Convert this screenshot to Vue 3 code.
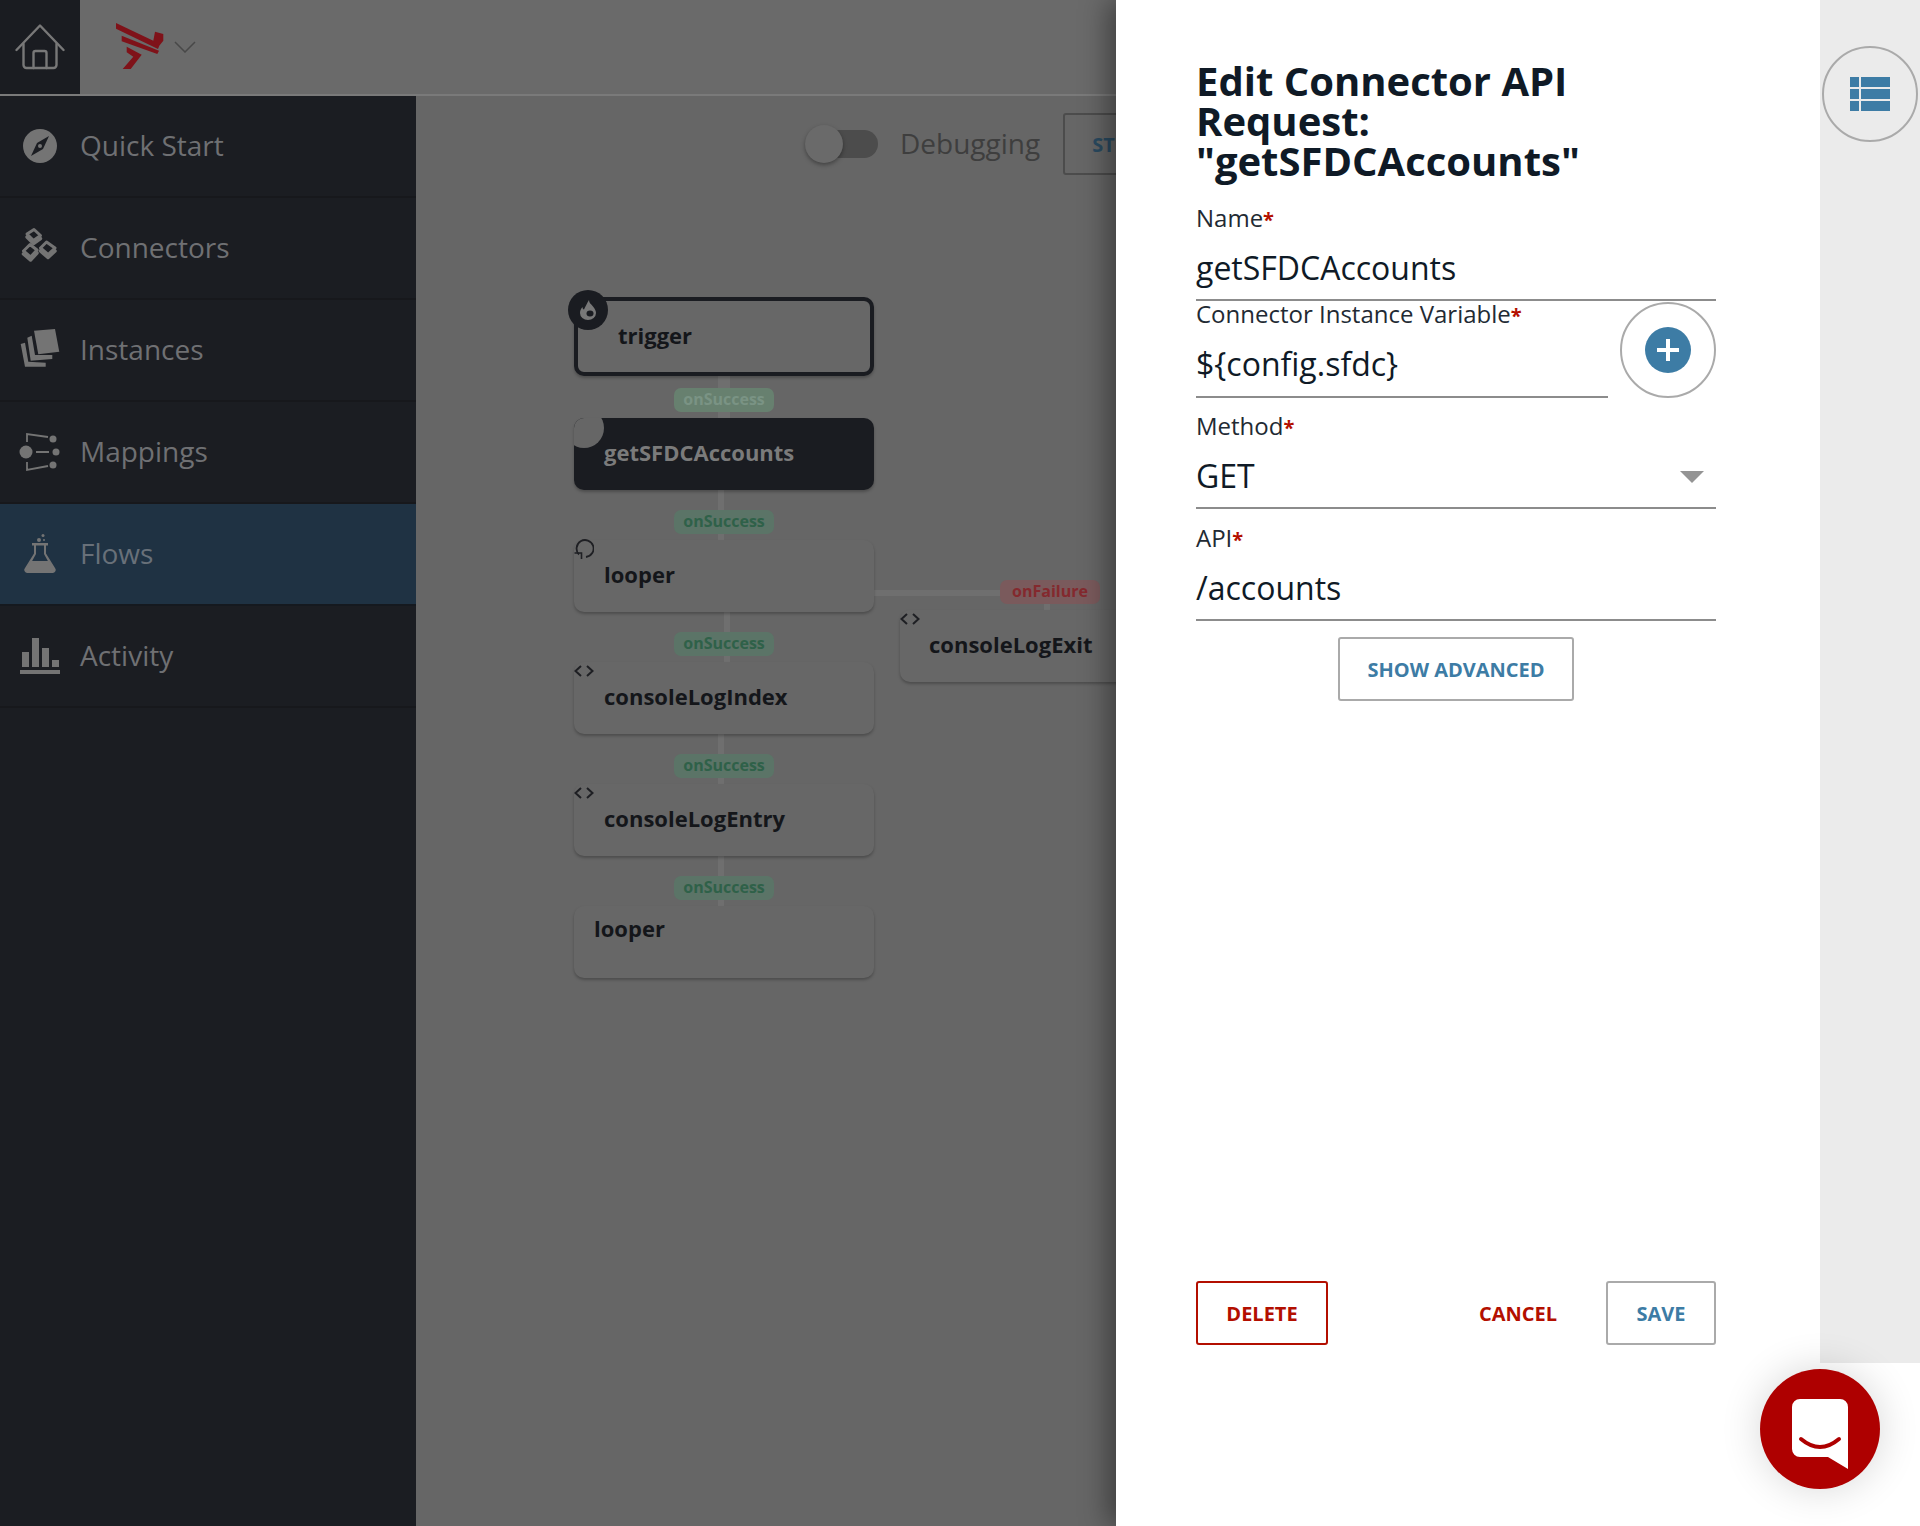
<script setup>
const navItems = [
  { label: 'Quick Start', icon: 'compass' },
  { label: 'Connectors', icon: 'cubes' },
  { label: 'Instances', icon: 'stack' },
  { label: 'Mappings', icon: 'map' },
  { label: 'Flows', icon: 'flask', active: true },
  { label: 'Activity', icon: 'bars' },
]
const nodes = [
  { label: 'trigger', x: 158, y: 201, h: 79, cls: 'selected', tx: 40, ty: 0 },
  { label: 'getSFDCAccounts', x: 158, y: 322, h: 72, cls: 'dark', tx: 30, ty: 0 },
  { label: 'looper', x: 158, y: 444, h: 72, icon: 'loop', tx: 30, ty: 0 },
  { label: 'consoleLogIndex', x: 158, y: 566, h: 72, icon: 'code', tx: 30, ty: 0 },
  { label: 'consoleLogEntry', x: 158, y: 688, h: 72, icon: 'code', tx: 30, ty: 0 },
  { label: 'looper', x: 158, y: 810, h: 72, tx: 20, ty: -12 },
  { label: 'consoleLogExit', x: 484, y: 514, h: 72, icon: 'code', tx: 29, ty: 0 },
]
const wires = [
  { x: 302, y: 279, w: 12, h: 44 },
  { x: 302, y: 394, w: 6, h: 50 },
  { x: 308, y: 516, w: 6, h: 50 },
  { x: 302, y: 638, w: 6, h: 50 },
  { x: 302, y: 760, w: 6, h: 50 },
  { x: 458, y: 494, w: 130, h: 6 },
  { x: 628, y: 505, w: 6, h: 10 },
]
const pills = [
  { label: 'onSuccess', x: 258, y: 292, cls: 'faint' },
  { label: 'onSuccess', x: 258, y: 414, cls: 'ok' },
  { label: 'onSuccess', x: 258, y: 536, cls: 'ok' },
  { label: 'onSuccess', x: 258, y: 658, cls: 'ok' },
  { label: 'onSuccess', x: 258, y: 780, cls: 'ok' },
  { label: 'onFailure', x: 584, y: 484, cls: 'bad' },
]
const place = (o) => ({ left: o.x + 'px', top: o.y + 'px' })
</script>

<template>
  <div class="page">
    <div class="main">
      <header class="topbar">
        <div class="home">
          <svg width="50" height="46" viewBox="0 0 50 46" fill="none" stroke="#787878" stroke-width="2.4" stroke-linecap="round" stroke-linejoin="round">
            <path d="M1.500 26 25 1.500 48.500 26" />
            <path d="M8.500 20v21a3 3 0 0 0 3 3h27a3 3 0 0 0 3-3V20" />
            <path d="M18.500 44V29a2 2 0 0 1 2-2h9a2 2 0 0 1 2 2v15" />
          </svg>
        </div>
        <svg class="logo" width="50" height="48" viewBox="0 0 50 48" fill="#7f1219">
          <path d="M0 0 37.300 17.700 39 8.700 47.300 11V17.700L43.300 22.700 42 26 0 5.700z" />
          <path d="M5.700 12.700 43 27.700 41.300 31 5.700 18.300z" />
          <path d="M10.700 23.700 25.700 31.700 14.700 46H6.700L17.300 33.700 10.700 29.300z" />
        </svg>
        <svg class="chev" width="22" height="12" viewBox="0 0 22 12" fill="none" stroke="#484848" stroke-width="1.500"><path d="M1 1l10 10L21 1" /></svg>
      </header>
      <div class="body">
        <nav class="sidebar">
          <a v-for="item in navItems" :key="item.label" class="nav-item" :class="{ active: item.active }">
            <span class="nav-icon">
              <svg width="40" height="40" viewBox="0 0 40 40" fill="#747474">
                <template v-if="item.icon === 'compass'">
                  <circle cx="20" cy="20" r="17" />
                  <path d="M29 10 17 17 11 30 23 23z" fill="#1b1d22" />
                  <circle cx="20" cy="20" r="2" fill="#747474" />
                </template>
                <template v-else-if="item.icon === 'cubes'">
                  <g fill="#747474" stroke="#747474" stroke-width="3.500" stroke-linejoin="round">
                    <path d="M14 4.500 20.500 10.500 13.500 15.500 7 9z" />
                    <path d="M10 19.500 17 25 10.500 32 3.500 26z" />
                    <path d="M26.500 17 35 23 28 29.500 20.500 23z" />
                  </g>
                  <g fill="#1b1d22" stroke="#747474" stroke-width="3" stroke-linejoin="round">
                    <path d="M14 1.500 20.500 7.500 13.500 12.500 7 6z" />
                    <path d="M10 16.500 17 22 10.500 29 3.500 23z" />
                    <path d="M26.500 14 35 20 28 26.500 20.500 20z" />
                  </g>
                </template>
                <template v-else-if="item.icon === 'stack'">
                  <path d="M14 .7 35-1 39.300 21.700 18.300 24.300z" />
                  <path d="M7.300 7.700 11.700 5.700 15 25H32.300V29L10.700 30.700z" />
                  <path d="M.7 14 5 12.700 8.300 31.700 25.700 32.700V36.700H5z" />
                </template>
                <template v-else-if="item.icon === 'map'">
                  <circle cx="6" cy="20" r="6.500" />
                  <circle cx="33" cy="7" r="3.500" />
                  <circle cx="36" cy="20" r="3.500" />
                  <circle cx="33" cy="33" r="3.500" />
                  <path d="M7 10V2l21 3M16 20h13M7 30v8l21-4" fill="none" stroke="#747474" stroke-width="1.800" />
                </template>
                <template v-else-if="item.icon === 'flask'">
                  <circle cx="23" cy="1.500" r="1.500" />
                  <circle cx="19" cy="6" r="2" />
                  <circle cx="24" cy="6" r="1" />
                  <rect x="12" y="9" width="16" height="2.500" />
                  <path d="M14 11h2v9L11 29h18l-5-9v-9h2v8.500l9 14.500a3 3 0 0 1-2 5H7a3 3 0 0 1-2-5l9-14.500z" />
                  <path d="M11 27h18l5 8-1 2H7l-1-2z" />
                </template>
                <template v-else>
                  <rect x="2" y="16" width="7" height="15" />
                  <rect x="12" y="2" width="7" height="29" />
                  <rect x="22" y="12" width="7" height="19" />
                  <rect x="32" y="24" width="7" height="7" />
                  <rect x="0" y="34" width="40" height="4" />
                </template>
              </svg>
            </span>
            <span class="nav-label">{{ item.label }}</span>
          </a>
        </nav>
        <section class="canvas">
          <div class="toolbar">
            <span class="switch"><span class="knob"></span></span>
            <span class="debug">Debugging</span>
            <button class="step">STEP</button>
          </div>
          <div v-for="(w, i) in wires" :key="'w' + i" class="wire" :style="{ ...place(w), width: w.w + 'px', height: w.h + 'px' }"></div>
          <div v-for="(n, i) in nodes" :key="'n' + i" class="node" :class="n.cls" :style="{ ...place(n), height: n.h + 'px', paddingLeft: n.tx + 'px' }">
            <span class="node-text" :style="{ marginTop: n.ty * 2 + 'px' }">{{ n.label }}</span>
            <span v-if="n.cls === 'selected'" class="badge fire">
              <svg width="16" height="20" viewBox="0 0 16 20" fill="#787878"><path d="M9 0c0 3 2 4 4 6.500 2 2.500 3 4.500 3 6.500a8 7 0 0 1-16 0c0-2.500 1-4.500 2.500-6 0 1.500.7 2.500 1.500 2.500C5 7 7 3.500 9 0z" /><ellipse cx="10" cy="13.500" rx="3.500" ry="3" fill="#1a1c21" /></svg>
            </span>
            <span v-if="n.cls === 'dark'" class="badge blank"></span>
            <svg v-if="n.icon === 'loop'" class="node-icon" width="20" height="20" viewBox="0 0 20 20" fill="none" stroke="#1e1f23" stroke-width="1.800"><path d="M5 15.500A8.500 8.500 0 1 1 12 18" /><path d="M0.500 14h7v6" stroke-width="1.600" /></svg>
            <svg v-if="n.icon === 'code'" class="node-icon" width="20" height="20" viewBox="0 0 20 20" fill="none" stroke="#1e1f23" stroke-width="2"><path d="M7 5 1.500 10 7 15M13 5l5.500 5L13 15" /></svg>
          </div>
          <span v-for="(p, i) in pills" :key="'p' + i" class="pill" :class="p.cls" :style="place(p)">{{ p.label }}</span>
        </section>
      </div>
    </div>
    <aside class="panel">
      <h1 class="title">Edit Connector API Request: "getSFDCAccounts"</h1>
      <div class="field">
        <label>Name<em>*</em></label>
        <div class="value">getSFDCAccounts</div>
      </div>
      <div class="with-action">
        <div class="field grow">
          <label>Connector Instance Variable<em>*</em></label>
          <div class="value">${config.sfdc}</div>
        </div>
        <button class="round-add">
          <svg width="46" height="46" viewBox="0 0 46 46"><circle cx="23" cy="23" r="23" fill="#3d7ca5" /><path d="M23 12v22M12 23h22" stroke="#fff" stroke-width="4" /></svg>
        </button>
      </div>
      <div class="field gap">
        <label>Method<em>*</em></label>
        <div class="value select">GET<i class="arrow"></i></div>
      </div>
      <div class="field gap api">
        <label>API<em>*</em></label>
        <div class="value">/accounts</div>
      </div>
      <button class="btn advanced">SHOW ADVANCED</button>
      <div class="actions">
        <button class="btn delete">DELETE</button>
        <button class="btn-text">CANCEL</button>
        <button class="btn save">SAVE</button>
      </div>
    </aside>
    <aside class="rail">
      <div class="rail-top">
        <button class="round-list">
          <svg width="40" height="34" viewBox="0 0 40 34" fill="#3d7ca5">
            <rect x="0" y="0" width="9" height="10" /><rect x="11" y="0" width="29" height="10" />
            <rect x="0" y="12" width="9" height="10" /><rect x="11" y="12" width="29" height="10" />
            <rect x="0" y="24" width="9" height="10" /><rect x="11" y="24" width="29" height="10" />
          </svg>
        </button>
      </div>
      <button class="chat">
        <svg width="56" height="70" viewBox="0 0 56 70">
          <path d="M8 0h40a8 8 0 0 1 8 8v62L36 58H8a8 8 0 0 1-8-8V8a8 8 0 0 1 8-8z" fill="#fff" />
          <path d="M9 40q19 16 38 0" fill="none" stroke="#ae0000" stroke-width="4" stroke-linecap="round" />
        </svg>
      </button>
    </aside>
  </div>
</template>

<style>
html, body { margin: 0; background: #fff; }
</style>

<style scoped>
* { box-sizing: border-box; }
.page {
  display: flex;
  width: 1920px;
  height: 1526px;
  overflow: hidden;
  font-family: "Open Sans", "Liberation Sans", sans-serif;
  color: #0f1a26;
}
button { font-family: inherit; background: none; padding: 0; cursor: pointer; }
.main {
  width: 1116px;
  flex: none;
  display: flex;
  flex-direction: column;
  overflow: hidden;
}
.topbar {
  height: 96px;
  flex: none;
  display: flex;
  align-items: center;
  background: #6a6a6a;
  border-bottom: 2px solid #7a7a7a;
}
.home {
  width: 80px;
  height: 94px;
  background: #1a1c21;
  display: flex;
  align-items: center;
  justify-content: center;
}
.logo { margin-left: 36px; margin-top: -1px; }
.chev { margin-left: 8px; margin-top: 0; }
.body { flex: 1; display: flex; min-height: 0; }
.sidebar {
  width: 416px;
  flex: none;
  background: #1b1d22;
}
.nav-item {
  height: 102px;
  padding-left: 20px;
  display: flex;
  align-items: center;
  gap: 20px;
  border-bottom: 2px solid #17181c;
  font-size: 28px;
  color: #6f7073;
}
.nav-item.active { background: #1f3243; color: #687079; border-bottom-color: #15191f; }
.nav-icon { width: 40px; height: 40px; display: flex; }
.nav-icon svg { overflow: visible; }
.nav-label { margin-bottom: 2px; }
.canvas { flex: 1; position: relative; background: #666; overflow: hidden; min-width: 0; }
.toolbar {
  display: flex;
  align-items: center;
  height: 62px;
  margin-top: 17px;
  padding-left: 399px;
}
.switch {
  position: relative;
  width: 63px;
  height: 28px;
  flex: none;
  border-radius: 14px;
  background: #4c4c4c;
}
.knob {
  position: absolute;
  left: -10px;
  top: -5px;
  width: 38px;
  height: 38px;
  border-radius: 50%;
  background: #6a6a6a;
  box-shadow: 0 2px 4px rgba(0, 0, 0, .35);
}
.debug { margin-left: 22px; margin-bottom: 2px; flex: none; font-size: 28px; color: #3e3e3e; }
.step {
  margin-left: 23px;
  height: 62px;
  width: 160px;
  flex: none;
  text-align: left;
  padding-left: 27px;
  border: 2px solid #4c4c4c;
  border-radius: 3px;
  font-size: 20px;
  font-weight: 700;
  color: #2a4a60;
}
.wire { position: absolute; background: #6f6f6f; }
.node {
  position: absolute;
  width: 300px;
  display: flex;
  align-items: center;
  background: #676767;
  border-radius: 10px;
  box-shadow: 0 2px 3px rgba(0, 0, 0, .25);
  font-size: 22px;
  font-weight: 700;
  color: #14161a;
}
.node.selected { border: 4px solid #1a1c21; }
.node.dark { background: #1a1c21; color: #7b7b7b; overflow: hidden; }
.node-text { position: relative; top: -2px; }
.badge { position: absolute; border-radius: 50%; display: flex; align-items: center; justify-content: center; }
.fire { left: -10px; top: -11px; width: 40px; height: 40px; background: #1a1c21; }
.blank { left: -10px; top: -10px; width: 40px; height: 40px; background: #666; }
.node-icon { position: absolute; left: 0; top: -1px; }
.pill {
  position: absolute;
  width: 100px;
  height: 24px;
  line-height: 23px;
  border-radius: 7px;
  text-align: center;
  font-size: 16px;
  font-weight: 700;
}
.pill.ok { background: #5b7467; color: #2f6149; }
.pill.faint { background: #67806f; color: #7a9384; }
.pill.bad { background: #7a5a5c; color: #84292e; }
.panel {
  width: 704px;
  flex: none;
  position: relative;
  z-index: 2;
  display: flex;
  flex-direction: column;
  padding: 60.500px 104px 181px 80px;
  background: #fff;
  box-shadow: -8px 0 26px rgba(0, 0, 0, .4);
}
.title {
  margin: 0 0 22.500px;
  font-size: 40px;
  line-height: 40px;
  font-weight: 700;
  color: #0f1a26;
  width: 440px;
}
.field { height: 98px; display: flex; flex-direction: column; border-bottom: 2px solid #8c8c8c; }
.field.gap { margin-top: 13px; }
.field.api { margin-top: 14px; }
.field.grow { flex: 1; height: 99px; }
label {
  height: 30px;
  font-size: 24px;
  line-height: 30px;
  color: #222a33;
}
label em { color: #b30f00; font-style: normal; font-weight: 700; font-size: 20px; }
.value {
  font-size: 32px;
  line-height: 44px;
  margin-top: 12.500px;
  color: #0f1a26;
  position: relative;
}
.with-action { display: flex; gap: 12px; margin-top: -2px; }
.round-add {
  width: 96px;
  height: 96px;
  flex: none;
  margin-top: 3px;
  border: 2px solid #aaa;
  border-radius: 50%;
  display: flex;
  align-items: center;
  justify-content: center;
}
.arrow {
  position: absolute;
  right: 12px;
  top: 17px;
  border-left: 12px solid transparent;
  border-right: 12px solid transparent;
  border-top: 12px solid #949494;
}
.btn {
  height: 64px;
  border: 2px solid #aaa;
  border-radius: 3px;
  font-size: 20px;
  font-weight: 700;
  color: #3d7ca5;
  background: #fff;
}
.advanced { width: 236px; align-self: center; margin-top: 16px; }
.actions { margin-top: auto; display: flex; align-items: center; }
.delete { width: 132px; border-color: #b30f00; color: #b30f00; }
.btn-text {
  margin-left: auto;
  margin-right: 49px;
  border: 0;
  font-size: 20px;
  font-weight: 700;
  color: #b30f00;
}
.save { width: 110px; }
.rail {
  width: 100px;
  flex: none;
  position: relative;
  z-index: 3;
  background: #fff;
}
.rail-top { height: 1363px; background: #ebebeb; padding: 46px 0 0 2px; }
.round-list {
  width: 96px;
  height: 96px;
  border: 2px solid #aaa;
  border-radius: 50%;
  background: none;
  display: flex;
  align-items: center;
  justify-content: center;
}
.chat {
  position: absolute;
  left: -60px;
  top: 1369px;
  z-index: 3;
  width: 120px;
  height: 120px;
  border: 0;
  border-radius: 50%;
  background: #ae0000;
  display: flex;
  align-items: center;
  justify-content: center;
  padding-top: 10px;
  box-shadow: 0 0 40px rgba(0, 0, 0, .16);
}
</style>
